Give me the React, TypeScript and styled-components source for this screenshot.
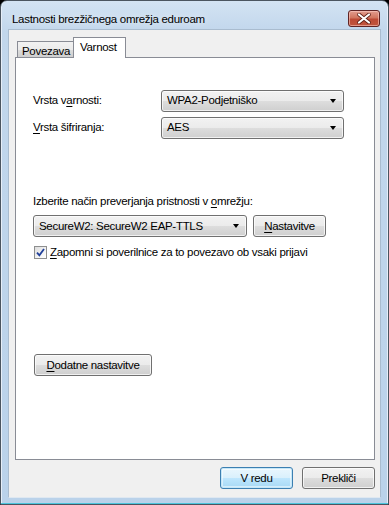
import React from "react";
import styled, { createGlobalStyle, css } from "styled-components";

const Global = createGlobalStyle`
  html, body { margin: 0; padding: 0; background: #000; }
  body {
    font-family: "Liberation Sans", Arial, sans-serif;
    font-size: 11.5px;
    letter-spacing: -0.3px;
    color: #000;
  }
  * { box-sizing: border-box; }
`;

const Window = styled.div`
  width: 389px;
  height: 505px;
  display: flex;
  flex-direction: column;
  border: 1px solid #4b5560;
  border-radius: 7px 7px 0 0;
  background: linear-gradient(180deg, #d3e3f3 0px, #c2d7ec 30px, #bad2ea 100%);
  padding: 0 7px 6px;
  box-shadow: inset 0 -1px 0 #4bc5dc, inset 1px 0 0 #e6eef8, inset -1px 0 0 #e6eef8;
`;

const TitleBar = styled.div`
  height: 29px;
  display: flex;
  align-items: flex-start;
  justify-content: space-between;
`;

const Title = styled.div`
  margin-top: 11px;
  margin-left: 4px;
  line-height: 15px;
  text-shadow: 0 0 8px rgba(255, 255, 255, 0.9);
`;

const CloseButton = styled.div`
  margin-top: 9px;
  margin-right: 1px;
  width: 32px;
  height: 17px;
  border: 1px solid #5f2424;
  border-radius: 3px;
  background: linear-gradient(180deg, #e29d8f 0%, #d1765f 45%, #bd4a35 55%, #c0553d 100%);
  box-shadow: inset 0 0 0 1px rgba(255, 210, 200, 0.55);
  display: flex;
  align-items: center;
  justify-content: center;
`;

const Client = styled.div`
  flex: 1;
  display: flex;
  flex-direction: column;
  background: #f0f0f0;
  padding: 7px 7px 8px 6px;
  border: 1px solid #a9bccf;
  border-bottom-color: #dfe8f1;
`;

const TabStrip = styled.div`
  display: flex;
  align-items: flex-end;
  padding-left: 2px;
  height: 21px;
  position: relative;
  z-index: 1;
  margin-bottom: -1px;
`;

const Tab = styled.div<{ $active?: boolean }>`
  border: 1px solid #898c95;
  border-bottom: none;
  white-space: nowrap;
  line-height: 15px;
  ${(p) =>
    p.$active
      ? css`
          height: 21px;
          background: #fff;
          padding-top: 2px;
          margin-left: -1px;
          width: 53px;
          padding-left: 6px;
        `
      : css`
          height: 16px;
          margin-bottom: 1px;
          width: 57px;
          padding-left: 4px;
          padding-top: 2px;
          background: linear-gradient(180deg, #f2f2f2 0%, #ebebeb 50%, #dddddd 51%, #cfcfcf 100%);
        `}
`;

const Panel = styled.div`
  width: 360px;
  height: 403px;
  border: 1px solid #898c95;
  background: #fff;
  padding: 32px 0 0 17px;
  display: flex;
  flex-direction: column;
`;

const FieldRow = styled.div<{ $gap?: number }>`
  display: flex;
  align-items: center;
  height: 21px;
  margin-bottom: ${(p) => p.$gap ?? 0}px;
`;

const Label = styled.div`
  width: 128px;
  line-height: 15px;
`;

const selectLook = css`
  height: 22px;
  border: 1px solid #707070;
  border-radius: 3px;
  background: linear-gradient(180deg, #f2f2f2 0%, #ebebeb 50%, #dddddd 51%, #cfcfcf 100%);
  box-shadow: inset 0 0 0 1px rgba(255, 255, 255, 0.7);
`;

const Select = styled.div<{ $w: number }>`
  ${selectLook}
  width: ${(p) => p.$w}px;
  display: flex;
  align-items: center;
  justify-content: space-between;
  padding: 0 7px 0 5px;
  line-height: 15px;
`;

const Arrow = styled.span`
  width: 0;
  height: 0;
  border-left: 3.5px solid transparent;
  border-right: 3.5px solid transparent;
  border-top: 4px solid #000;
`;

const Button = styled.div<{ $w: number; $default?: boolean }>`
  ${selectLook}
  width: ${(p) => p.$w}px;
  display: flex;
  align-items: center;
  justify-content: center;
  line-height: 15px;
  ${(p) =>
    p.$default &&
    css`
      border-color: #3c7fb1;
      background: linear-gradient(180deg, #eaf6fd 0%, #d9f0fc 50%, #bee6fd 51%, #a7d9f5 100%);
      box-shadow: inset 0 0 0 1px #c5e7f8, inset 0 0 0 2px rgba(255,255,255,0.5);
    `}
`;

const Hint = styled.div`
  margin-top: 56px;
  line-height: 15px;
  margin-bottom: 6px;
`;

const AuthRow = styled.div`
  display: flex;
  gap: 6px;
  height: 22px;
`;

const CheckRow = styled.label`
  display: flex;
  align-items: center;
  gap: 3px;
  margin-top: 8px;
  padding-left: 1px;
  line-height: 15px;
`;

const CheckBox = styled.span`
  width: 13px;
  height: 13px;
  border: 1px solid #8e8f8f;
  background: linear-gradient(135deg, #dcdcdc 0%, #f4f4f4 60%, #fff 100%);
  display: flex;
  align-items: center;
  justify-content: center;
`;

const MoreButton = styled(Button)`
  margin-top: 94px;
  margin-left: 1px;
`;

const Footer = styled.div`
  display: flex;
  justify-content: flex-end;
  gap: 9px;
  margin-top: 7px;
  width: 360px;
`;

const U = styled.span`
  text-decoration: underline;
  text-underline-offset: 2px;
`;

export default function App() {
  return (
    <>
      <Global />
      <Window>
        <TitleBar>
          <Title>Lastnosti brezžičnega omrežja eduroam</Title>
          <CloseButton>
            <svg width="14" height="11" viewBox="0 0 14 11">
              <path
                d="M2 1.5 L12 9.5 M12 1.5 L2 9.5"
                stroke="#5a1c12"
                strokeWidth="3.6"
                strokeLinecap="round"
              />
              <path
                d="M2 1.5 L12 9.5 M12 1.5 L2 9.5"
                stroke="#ffffff"
                strokeWidth="2.2"
                strokeLinecap="round"
              />
            </svg>
          </CloseButton>
        </TitleBar>
        <Client>
          <TabStrip>
            <Tab>Povezava</Tab>
            <Tab $active>Varnost</Tab>
          </TabStrip>
          <Panel>
            <FieldRow $gap={6}>
              <Label>
                Vrsta v<U>a</U>rnosti:
              </Label>
              <Select $w={183}>
                <span>WPA2-Podjetniško</span>
                <Arrow />
              </Select>
            </FieldRow>
            <FieldRow>
              <Label>
                <U>V</U>rsta šifriranja:
              </Label>
              <Select $w={183}>
                <span>AES</span>
                <Arrow />
              </Select>
            </FieldRow>
            <Hint>
              Izberite način preverjanja pristnosti v <U>o</U>mrežju:
            </Hint>
            <AuthRow>
              <Select $w={214}>
                <span>SecureW2: SecureW2 EAP-TTLS</span>
                <Arrow />
              </Select>
              <Button $w={73}>
                <span>
                  <U>N</U>astavitve
                </span>
              </Button>
            </AuthRow>
            <CheckRow>
              <CheckBox>
                <svg width="9" height="9" viewBox="0 0 9 9">
                  <path
                    d="M1 4.6 L3.4 7.4 L8 1"
                    stroke="#21409a"
                    strokeWidth="1.8"
                    fill="none"
                  />
                </svg>
              </CheckBox>
              <span>
                <U>Z</U>apomni si poverilnice za to povezavo ob vsaki prijavi
              </span>
            </CheckRow>
            <MoreButton $w={118}>
              <span>
                <U>D</U>odatne nastavitve
              </span>
            </MoreButton>
          </Panel>
          <Footer>
            <Button $w={73} $default>
              V redu
            </Button>
            <Button $w={73}>Prekliči</Button>
          </Footer>
        </Client>
      </Window>
    </>
  );
}
